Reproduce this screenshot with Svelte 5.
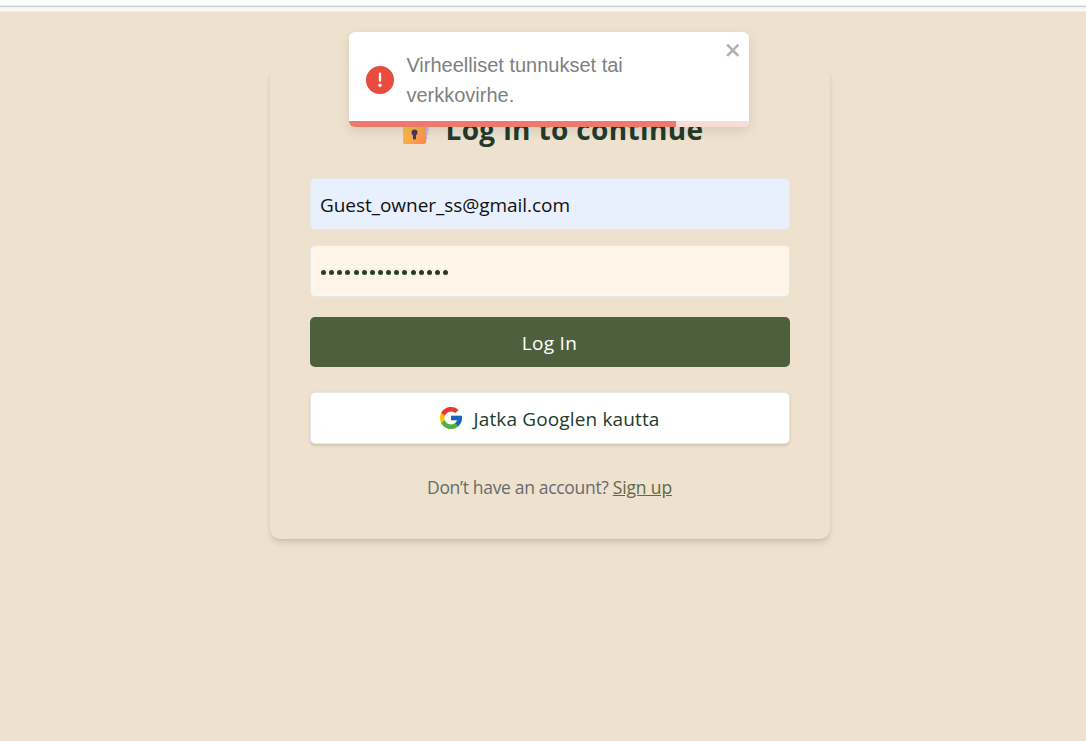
<script>
  let email = $state('Guest_owner_ss@gmail.com');
  const dots = Array.from({ length: 16 }, (_, i) => i);
  const progress = 81.75;
</script>

<div class="window">
  <div class="chrome"></div>
  <main>
    <section class="card">
      <h2>
        <svg class="lock" width="28" height="30" viewBox="0 0 28 30">
          <path d="M20 6h7v9l-1.500 2 1 2-1.500 2 .5 2-2 4.500-4-2z" fill="#c9b8dc" />
          <path d="M5 13V8a7 7 0 0 1 14 0v5" fill="none" stroke="#9b8aab" stroke-width="3" />
          <defs>
            <linearGradient id="body" x1="0" y1="0" x2="1" y2="1">
              <stop offset="0" stop-color="#f3c94b" />
              <stop offset="0.45" stop-color="#f9ae48" />
              <stop offset="1" stop-color="#ff8252" />
            </linearGradient>
          </defs>
          <path d="M1 10h23v16.500q0 2.500-2.500 2.500h-19Q1 29 1 27z" fill="url(#body)" />
          <circle cx="12.500" cy="17.500" r="3" fill="#4b3a59" />
          <rect x="11" y="18" width="3" height="6.500" rx="1" fill="#4b3a59" />
        </svg>
        <span>Log in to continue</span>
      </h2>
      <div class="field filled"><span>{email}</span></div>
      <div class="field password">
        {#each dots as dot (dot)}<i></i>{/each}
      </div>
      <button class="submit"><span>Log In</span></button>
      <button class="google">
        <svg width="22" height="22" viewBox="4 4 40 40">
          <path fill="#FFC107" d="M43.611 20.083H42V20H24v8h11.303c-1.649 4.657-6.08 8-11.303 8-6.627 0-12-5.373-12-12s5.373-12 12-12c3.059 0 5.842 1.154 7.961 3.039l5.657-5.657C34.046 6.053 29.268 4 24 4 12.955 4 4 12.955 4 24s8.955 20 20 20 20-8.955 20-20c0-1.341-.138-2.65-.389-3.917z" />
          <path fill="#E53935" d="M6.306 14.691l6.571 4.819C14.655 15.108 18.961 12 24 12c3.059 0 5.842 1.154 7.961 3.039l5.657-5.657C34.046 6.053 29.268 4 24 4 16.318 4 9.656 8.337 6.306 14.691z" />
          <path fill="#4CAF50" d="M24 44c5.166 0 9.86-1.977 13.409-5.192l-6.19-5.238A11.91 11.91 0 0 1 24 36c-5.202 0-9.619-3.317-11.283-7.946l-6.522 5.025C9.505 39.556 16.227 44 24 44z" />
          <path fill="#1565C0" d="M43.611 20.083H24v8h11.303a12.04 12.04 0 0 1-4.087 5.571l6.193 5.238C36.971 39.205 44 34 44 24c0-1.341-.138-2.65-.389-3.917z" />
        </svg>
        <span>Jatka Googlen kautta</span>
      </button>
      <p><span class="ask">Don’t have an account?</span> <a href="#signup">Sign up</a></p>
    </section>
  </main>

  <div class="toast" role="alert">
    <div class="content">
      <svg class="alert" width="28" height="28" viewBox="0 0 24 24">
        <path fill="#e74c3c" d="M11.983 0a12.206 12.206 0 0 0-8.51 3.653A11.8 11.8 0 0 0 0 12.207 11.779 11.779 0 0 0 11.8 24h.214A12.111 12.111 0 0 0 24 11.791 11.766 11.766 0 0 0 11.983 0zM10.5 16.542a1.476 1.476 0 0 1 1.449-1.53h.027a1.527 1.527 0 0 1 1.523 1.47 1.475 1.475 0 0 1-1.449 1.53h-.027a1.529 1.529 0 0 1-1.523-1.47zM11 12.5v-6a1 1 0 0 1 2 0v6a1 1 0 1 1-2 0z" />
      </svg>
      <div class="message">Virheelliset tunnukset tai verkkovirhe.</div>
    </div>
    <svg class="close" width="17.5" height="20" viewBox="0 0 14 16">
      <path fill="#b2b2b2" fill-rule="evenodd" d="M7.71 8.23l3.75 3.75-1.48 1.48-3.75-3.75-3.75 3.75L1 11.98l3.75-3.75L1 4.48 2.48 3l3.75 3.75L9.98 3l1.48 1.48-3.75 3.75z" />
    </svg>
    <div class="track"><div class="bar" style="width: {progress}%"></div></div>
  </div>
</div>

<style>
  :global(body) {
    margin: 0;
    background: #eee1ce;
  }
  .window {
    position: relative;
    height: 741px;
    overflow: hidden;
    background: #eee1ce;
    color: #233b2b;
    font-family: "Segoe UI", "Open Sans", "Noto Sans", sans-serif;
  }
  .chrome {
    box-sizing: border-box;
    height: 12px;
    border-top: 5px solid #fff;
    background: linear-gradient(#ececec 0 1px, #d0d0d1 1px 2px, #f7f7f7 2px 6px, #efebe6 6px);
  }
  main {
    display: flex;
    justify-content: center;
    padding: 55px 0 0 13px;
  }
  .card {
    box-sizing: border-box;
    width: 560px;
    height: 472px;
    padding: 42px 40px 0;
    border-radius: 10px;
    background: #eee1ce;
    box-shadow: 0 5px 7px -1px rgba(0, 0, 0, 0.1), 0 2.5px 5px -2.5px rgba(0, 0, 0, 0.12);
  }
  h2 {
    display: flex;
    align-items: center;
    gap: 16px;
    height: 40px;
    margin: 0 0 29px;
    padding-left: 92px;
    font-size: 28px;
    font-weight: 700;
    line-height: 40px;
    letter-spacing: 0.36px;
    white-space: nowrap;
  }
  h2 .lock {
    margin-top: 1px;
  }
  .field {
    box-sizing: border-box;
    display: flex;
    align-items: center;
    height: 52px;
    margin-bottom: 15px;
    padding: 0 10px;
    border: 1px solid #e5e7eb;
    border-radius: 5px;
    background: #fef4e8;
    font-size: 19px;
    letter-spacing: -0.05px;
  }
  .filled {
    padding: 2px 9.5px 0;
    background: #e8f0fe;
    color: #111;
  }
  .password {
    gap: 3.15px;
    margin-bottom: 20px;
    padding-left: 10.5px;
  }
  .password i {
    width: 5px;
    height: 5px;
    margin-top: 2px;
    border-radius: 50%;
    background: #233b2b;
  }
  button {
    box-sizing: border-box;
    display: flex;
    align-items: center;
    justify-content: center;
    width: 100%;
    border: 0;
    border-radius: 5px;
    color: inherit;
    font-family: inherit;
    font-size: 19px;
  }
  .submit {
    height: 50px;
    margin-bottom: 25px;
    padding: 2px 0 0;
    background: #4d603e;
    color: #fff;
    letter-spacing: 0.3px;
  }
  .google {
    gap: 11px;
    height: 52px;
    padding: 1px 0 0 1px;
    border: 1px solid #e5e7eb;
    background: #fff;
    box-shadow: 0 1.5px 3px rgba(0, 0, 0, 0.12);
    letter-spacing: 0.14px;
  }
  .google svg {
    margin-top: -1px;
  }
  .google span {
    padding-top: 1px;
  }
  p {
    margin: 31px 0 0;
    font-size: 17.5px;
    line-height: 25px;
    letter-spacing: -0.32px;
    text-align: center;
    white-space: nowrap;
  }
  .ask {
    color: #666b70;
  }
  a {
    color: #5c6b43;
    letter-spacing: -0.15px;
    text-decoration: underline;
  }
  .toast {
    position: absolute;
    z-index: 2;
    top: 32px;
    left: 349.4px;
    width: 400px;
    height: 95px;
    overflow: hidden;
    border-radius: 6px;
    background: #fff;
    color: #808080;
    box-shadow: 0 4px 12px rgba(0, 0, 0, 0.1);
    font-family: "Liberation Sans", Arial, sans-serif;
    font-size: 20px;
    line-height: 30px;
  }
  .content {
    display: flex;
    align-items: center;
    gap: 12px;
    box-sizing: border-box;
    height: 95px;
    padding: 0 90px 0 17px;
  }
  .alert {
    flex: none;
  }
  .close {
    position: absolute;
    top: 8px;
    right: 7px;
  }
  .track {
    position: absolute;
    inset: auto 0 0;
    height: 6px;
    background: #f9dbd8;
  }
  .bar {
    height: 100%;
    background: #ee786b;
  }
</style>
